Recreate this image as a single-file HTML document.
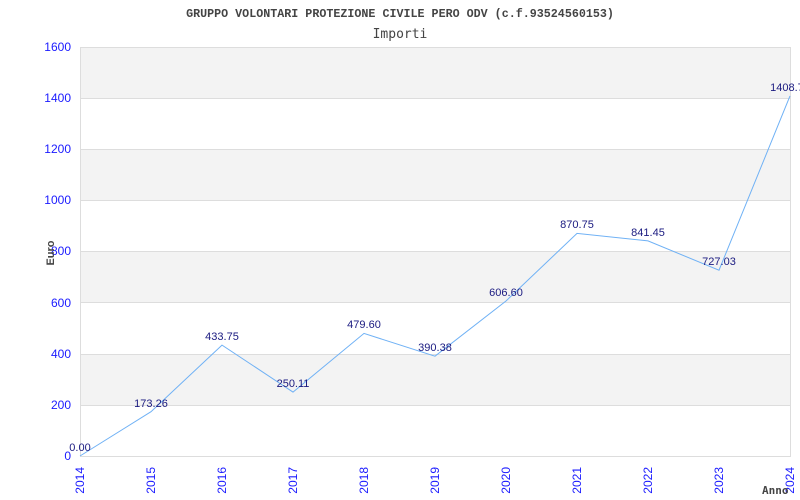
<!DOCTYPE html>
<html><head><meta charset="utf-8"><style>
html,body{margin:0;padding:0;background:#fff;width:800px;height:500px;overflow:hidden}
</style></head><body>
<svg width="800" height="500" xmlns="http://www.w3.org/2000/svg">
<rect width="800" height="500" fill="#fff"/>
<text x="400" y="17" text-anchor="middle" font-family="Liberation Mono, monospace" font-weight="bold" font-size="11.7" fill="#444">GRUPPO VOLONTARI PROTEZIONE CIVILE PERO ODV (c.f.93524560153)</text>
<text x="400" y="38" text-anchor="middle" font-family="DejaVu Sans Mono, monospace" font-size="13" fill="#444">Importi</text>
<g fill="#f3f3f3">
<rect x="80" y="47" width="710" height="51"/>
<rect x="80" y="149" width="710" height="51"/>
<rect x="80" y="251" width="710" height="51"/>
<rect x="80" y="354" width="710" height="51"/>
</g>
<g stroke="#ddd" stroke-width="1">
<line x1="80" y1="98.5" x2="790" y2="98.5"/>
<line x1="80" y1="149.5" x2="790" y2="149.5"/>
<line x1="80" y1="200.5" x2="790" y2="200.5"/>
<line x1="80" y1="251.5" x2="790" y2="251.5"/>
<line x1="80" y1="302.5" x2="790" y2="302.5"/>
<line x1="80" y1="354.5" x2="790" y2="354.5"/>
<line x1="80" y1="405.5" x2="790" y2="405.5"/>
<rect x="80.5" y="47.5" width="710" height="409" fill="none"/>
</g>
<g font-family="Liberation Sans, sans-serif" font-size="12" fill="#1a1aff" text-anchor="end">
<text x="71" y="51">1600</text><text x="71" y="102">1400</text><text x="71" y="153">1200</text>
<text x="71" y="204">1000</text><text x="71" y="255">800</text><text x="71" y="307">600</text>
<text x="71" y="358">400</text><text x="71" y="409">200</text><text x="71" y="460">0</text>
</g>
<g font-family="Liberation Sans, sans-serif" font-size="12" fill="#1a1aff" text-anchor="end">
<text transform="translate(84,467) rotate(-90)">2014</text>
<text transform="translate(155,467) rotate(-90)">2015</text>
<text transform="translate(226,467) rotate(-90)">2016</text>
<text transform="translate(297,467) rotate(-90)">2017</text>
<text transform="translate(368,467) rotate(-90)">2018</text>
<text transform="translate(439,467) rotate(-90)">2019</text>
<text transform="translate(510,467) rotate(-90)">2020</text>
<text transform="translate(581,467) rotate(-90)">2021</text>
<text transform="translate(652,467) rotate(-90)">2022</text>
<text transform="translate(723,467) rotate(-90)">2023</text>
<text transform="translate(794,467) rotate(-90)">2024</text>
</g>
<text transform="translate(54,253) rotate(-90)" text-anchor="middle" font-family="Liberation Sans, sans-serif" font-weight="bold" font-size="11" fill="#444">Euro</text>
<text x="762" y="494" font-family="DejaVu Sans Mono, monospace" font-weight="bold" font-size="11" fill="#444">Anno</text>
<polyline fill="none" stroke="#6fb1f5" stroke-width="1" points="80,456 151,411.7 222,345.1 293,392.1 364,333.4 435,356.2 506,301 577,233.4 648,240.9 719,270.2 790,95.9"/>
<g font-family="Liberation Sans, sans-serif" font-size="11" fill="#1a1a80" text-anchor="middle">
<text x="80" y="451">0.00</text>
<text x="151" y="407">173.26</text>
<text x="222" y="340">433.75</text>
<text x="293" y="387">250.11</text>
<text x="364" y="328">479.60</text>
<text x="435" y="351">390.38</text>
<text x="506" y="296">606.60</text>
<text x="577" y="228">870.75</text>
<text x="648" y="236">841.45</text>
<text x="719" y="265">727.03</text>
<text x="790" y="91">1408.70</text>
</g>
</svg>
</body></html>
